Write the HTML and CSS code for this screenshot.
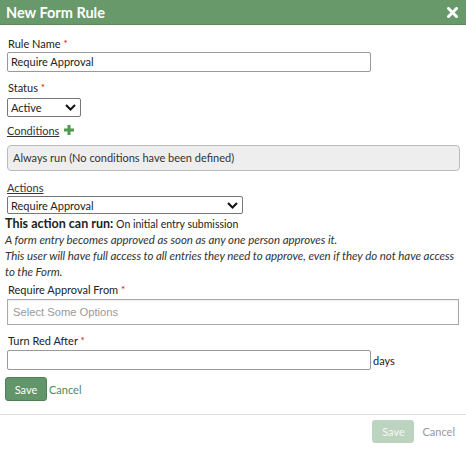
FILE: index.html
```html
<!DOCTYPE html>
<html>
<head>
<meta charset="utf-8">
<link rel="stylesheet" href="styles.css">
</head>
<body>
<div class="dialog">
  <div class="titlebar">
    <span class="title">New Form Rule</span>
    <svg class="close" width="11" height="11" viewBox="0 0 11 11"><path d="M1.5 1.5 L9.5 9.5 M9.5 1.5 L1.5 9.5" stroke="#fff" stroke-width="3" stroke-linecap="square"/></svg>
  </div>
  <div class="body">
    <label class="label">Rule Name <span class="req">*</span></label>
    <div class="input name-input">Require Approval</div>
    <label class="label status-label">Status <span class="req">*</span></label>
    <div class="select status-select"><span>Active</span>
      <svg width="11" height="7" viewBox="0 0 11 7"><path d="M1 1 L5.5 5.5 L10 1" stroke="#111" stroke-width="2" fill="none"/></svg>
    </div>
    <div class="section-head">
      <span class="ul">Conditions</span>
      <svg class="plus" width="10" height="10" viewBox="0 0 10 10"><path d="M5 0 V10 M0 5 H10" stroke="#4e9a4e" stroke-width="3"/></svg>
    </div>
    <div class="cond-box">Always run (No conditions have been defined)</div>
    <div class="section-head actions-head"><span class="ul">Actions</span></div>
    <div class="select action-select"><span>Require Approval</span>
      <svg width="11" height="7" viewBox="0 0 11 7"><path d="M1 1 L5.5 5.5 L10 1" stroke="#111" stroke-width="2" fill="none"/></svg>
    </div>
    <div class="canrun"><b>This action can run:</b> <span>On initial entry submission</span></div>
    <div class="desc">A form entry becomes approved as soon as any one person approves it.<br>This user will have full access to all entries they need to approve, even if they do not have access to the Form.</div>
    <label class="label req-label">Require Approval From <span class="req">*</span></label>
    <div class="multi">Select Some Options</div>
    <label class="label turn-label">Turn Red After <span class="req">*</span></label>
    <div class="row"><div class="input days-input"></div><span class="days">days</span></div>
    <div class="btnrow">
      <button class="btn save">Save</button><span class="link">Cancel</span>
    </div>
  </div>
  <div class="footer">
    <button class="btn save disabled">Save</button><span class="cancel-muted">Cancel</span>
  </div>
</div>
</body>
</html>
```
FILE: styles.css
```css
* { box-sizing: border-box; }
html, body { margin: 0; padding: 0; background: #fff; }
body { font-family: Lato, "Noto Sans", sans-serif; font-size: 11px; color: #222; width: 466px; height: 450px; overflow: hidden; }
.titlebar { height: 25px; background: #68996a; border-bottom: 1px solid #5a8a5c; display: flex; align-items: center; justify-content: space-between; padding: 0 8px 0 6px; }
.title { color: #fff; font-size: 14.5px; font-weight: 700; }
.close { display: block; }
.body { padding: 12px 7px 0 7px; }
.label { display: block; height: 14px; line-height: 14px; margin-left: 1px; }
.req { color: #d00; font-size: 10px; vertical-align: top; line-height: 12px; }
.input { height: 20px; border: 1px solid #999; border-radius: 2px; padding: 0 3px; line-height: 18px; margin-top: 1px; }
.name-input { width: 364px; }
.status-label { margin-top: 9px; }
.select { display: flex; align-items: center; justify-content: space-between; border: 1px solid #777; border-radius: 2px; padding: 0 4px 0 3px; }
.status-select { width: 74px; height: 19px; margin-top: 3px; }
.section-head { display: flex; align-items: center; gap: 5px; height: 14px; margin-top: 6px; }
.ul { text-decoration: underline; color: #333; }
.cond-box { margin-top: 8px; height: 26px; width: 453px; background: #eee; border: 1px solid #bbb; border-radius: 4px; padding: 0 5px; line-height: 24px; color: #333; }
.actions-head { margin-top: 9px; }
.action-select { width: 236px; height: 18px; margin-top: 2px; }
.canrun { margin-top: 2px; margin-left: -2px; line-height: 16px; height: 16px; }
.canrun b { font-weight: 700; font-size: 12.5px; }
.canrun span { font-size: 10.5px; }
.desc { font-style: italic; font-size: 11.5px; line-height: 16px; color: #333; margin-left: -2px; margin-right: -6px; letter-spacing: -0.05px; }
.req-label { margin-top: 3px; }
.multi { height: 26px; width: 452px; border: 1px solid #aaa; margin-top: 2px; padding: 0 5px; line-height: 24px; font-family: "Liberation Sans", Arial, sans-serif; font-size: 11.2px; color: #999; box-shadow: inset 0 1px 2px rgba(0,0,0,0.08); }
.turn-label { margin-top: 9px; }
.row { display: flex; align-items: center; margin-top: 2px; }
.days-input { width: 364px; margin-top: 0; }
.days { margin-left: 2px; }
.btnrow { display: flex; align-items: center; margin-top: 7px; margin-left: -2px; }
.btn { font-family: inherit; font-size: 11px; color: #fff; background: #62956a; border: 1px solid #4f7f55; border-radius: 3px; height: 24px; width: 42px; padding: 0; }
.link { color: #4f8a55; margin-left: 2px; }
.footer { margin-top: 13px; border-top: 1px solid #ddd; display: flex; justify-content: flex-end; align-items: flex-start; padding: 5px 11px 0 0; }
.footer .btn { height: 23px; }
.btn.disabled { background: #bcd3bf; border-color: #bcd3bf; color: #f4f8f4; }
.cancel-muted { color: #999; margin-left: 8px; line-height: 23px; }
```
